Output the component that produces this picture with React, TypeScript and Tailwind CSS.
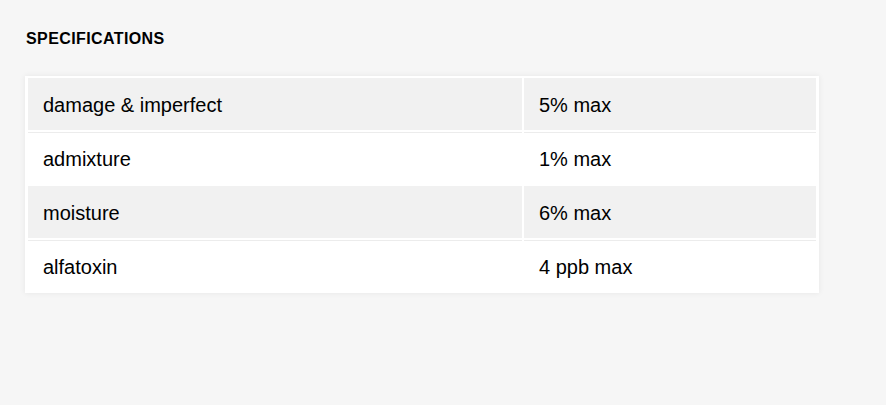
const SPECS = [
  { name: "damage & imperfect", value: "5% max" },
  { name: "admixture", value: "1% max" },
  { name: "moisture", value: "6% max" },
  { name: "alfatoxin", value: "4 ppb max" },
];

export default function App() {
  return (
    <div className="min-h-[405px] w-full bg-[#f6f6f6] px-[25px] pt-[30px] font-['Liberation_Sans',Arial,sans-serif] text-black">
      <h3 className="pl-px text-[16px] font-bold leading-[18px] tracking-[0.4px] text-black">
        SPECIFICATIONS
      </h3>
      <div className="mt-[28px] w-[794px] bg-white px-[3px] pb-[1px] pt-[2px] shadow-[0_0_6px_rgba(0,0,0,0.07)]">
        <div className="flex flex-col gap-[2px]">
          {SPECS.map((row, i) => {
            const odd = i % 2 === 0;
            const cell = odd
              ? "flex h-[52px] items-center border-t border-[#f1f1f1] bg-[#f1f1f1] pl-[15px]"
              : "flex h-[52px] items-center border-t border-[#ececec] bg-white pl-[15px]";
            return (
              <div key={row.name} className="grid grid-cols-[494px_292px] gap-[2px] text-[20px] leading-[24px]">
                <div className={cell}>{row.name}</div>
                <div className={cell}>{row.value}</div>
              </div>
            );
          })}
        </div>
      </div>
    </div>
  );
}
